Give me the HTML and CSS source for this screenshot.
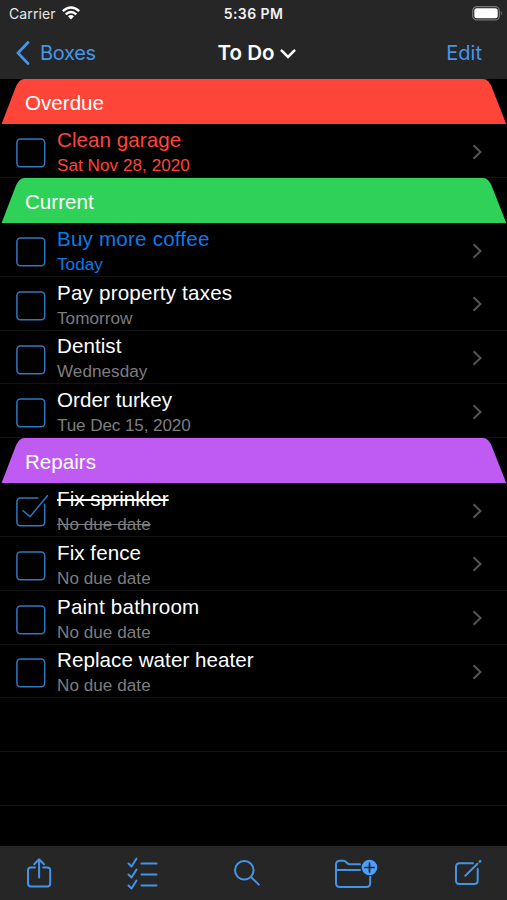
FILE: index.html
```html
<!DOCTYPE html>
<html lang="en">
<head>
<meta charset="utf-8">
<title>To Do</title>
<link rel="stylesheet" href="styles.css">
</head>
<body>
<svg class="defs" width="0" height="0" aria-hidden="true">
  <symbol id="tab" viewBox="0 0 507 45.2" preserveAspectRatio="none"><path d="M1.500 45.200 15 10Q18.500 0 24.500 0H483Q489 0 492.500 10L506.300 45.200Z" fill="currentColor"/></symbol>
  <symbol id="box" viewBox="0 0 32 32"><rect x=".9" y="3" width="27.800" height="27.700" rx="3.500"/></symbol>
  <symbol id="checked" viewBox="0 0 32 32"><path d="M22.300 3H4.400A3.500 3.500 0 0 0 .9 6.500V27.200A3.500 3.500 0 0 0 4.400 30.700H25.200A3.500 3.500 0 0 0 28.700 27.200V8.800M6.500 15.200 14 21.700 32 0"/></symbol>
  <symbol id="next" viewBox="0 0 10 16"><path d="M1.500 1.200 8.500 8 1.500 14.800"/></symbol>
</svg>
<div class="app">
  <header class="bar">
    <div class="status">
      <div class="carrier"><span>Carrier</span>
        <svg class="wifi" viewBox="0 0 18 14"><path d="M.8 5.200Q9-2 17.200 5.200M3.700 8.300Q9 3.700 14.300 8.300" fill="none" stroke="#fff" stroke-width="2.400"/><path d="M6 10.300Q9 7.900 12 10.300L9 13.500Z" fill="#fff"/></svg>
      </div>
      <span class="time">5:36 PM</span>
      <svg class="battery" viewBox="0 0 31 15"><rect x=".7" y=".7" width="26.600" height="13.200" rx="4" fill="none" stroke="#777" stroke-width="1.200"/><rect x="2.300" y="2.300" width="23.400" height="10" rx="2.500" fill="#fff"/><path d="M28.800 5Q31 7.300 28.800 9.600Z" fill="#777"/></svg>
    </div>
    <nav class="nav">
      <a class="back"><svg viewBox="0 0 14 24"><path d="M12 1.500 2 12 12 22.500"/></svg><span>Boxes</span></a>
      <h1><span>To Do</span><svg viewBox="0 0 16 10"><path d="M1.700 1.700 8 8 14.300 1.700"/></svg></h1>
      <a class="edit">Edit</a>
    </nav>
  </header>
  <main>
    <h2 class="red"><svg><use href="#tab"/></svg><span>Overdue</span></h2>
    <div class="row late"><svg class="check"><use href="#box"/></svg><div class="text"><p class="name">Clean garage</p><p class="due">Sat Nov 28, 2020</p></div><svg class="next"><use href="#next"/></svg></div>
    <h2 class="green"><svg><use href="#tab"/></svg><span>Current</span></h2>
    <div class="row today"><svg class="check"><use href="#box"/></svg><div class="text"><p class="name wide">Buy more coffee</p><p class="due">Today</p></div><svg class="next"><use href="#next"/></svg></div>
    <div class="row"><svg class="check"><use href="#box"/></svg><div class="text"><p class="name wide">Pay property taxes</p><p class="due">Tomorrow</p></div><svg class="next"><use href="#next"/></svg></div>
    <div class="row"><svg class="check"><use href="#box"/></svg><div class="text"><p class="name">Dentist</p><p class="due">Wednesday</p></div><svg class="next"><use href="#next"/></svg></div>
    <div class="row"><svg class="check"><use href="#box"/></svg><div class="text"><p class="name">Order turkey</p><p class="due tight">Tue Dec 15, 2020</p></div><svg class="next"><use href="#next"/></svg></div>
    <h2 class="purple"><svg><use href="#tab"/></svg><span>Repairs</span></h2>
    <div class="row done"><svg class="check"><use href="#checked"/></svg><div class="text"><p class="name">Fix sprinkler</p><p class="due">No due date</p></div><svg class="next"><use href="#next"/></svg></div>
    <div class="row"><svg class="check"><use href="#box"/></svg><div class="text"><p class="name">Fix fence</p><p class="due">No due date</p></div><svg class="next"><use href="#next"/></svg></div>
    <div class="row"><svg class="check"><use href="#box"/></svg><div class="text"><p class="name wide">Paint bathroom</p><p class="due">No due date</p></div><svg class="next"><use href="#next"/></svg></div>
    <div class="row"><svg class="check"><use href="#box"/></svg><div class="text"><p class="name">Replace water heater</p><p class="due">No due date</p></div><svg class="next"><use href="#next"/></svg></div>
    <div class="row"></div>
    <div class="row"></div>
  </main>
  <footer class="tools">
    <svg width="26" height="32" viewBox="0 0 26 32"><path d="M9 10.500H5Q2 10.500 2 13.500V26.500Q2 29.500 5 29.500H21.200Q24.200 29.500 24.200 26.500V13.500Q24.200 10.500 21.200 10.500H17.200M13.100 20.500V2.500M8.200 7.200 13.100 2.200 18 7.200"/></svg>
    <svg width="32" height="34" viewBox="0 0 32 34"><path d="M14.500 7.500H29.500M14.500 18.500H29.500M14.500 29.500H29.500M1.500 7.500 4.500 10.500 9.500 2.500M1.500 18.500 4.500 21.500 9.500 13.500M1.500 29.500 4.500 32.500 9.500 24.500"/></svg>
    <svg width="28" height="28" viewBox="0 0 28 28"><circle cx="11.300" cy="11.300" r="9.300"/><path d="M18 18 25.800 25.600"/></svg>
    <svg class="folder" width="44" height="32" viewBox="0 0 44 32"><path d="M26 7.200H15.500Q14 7.200 12.500 5.500 11 3.800 9.500 3.800H6Q2 3.800 2 7.800V26Q2 30 6 30H32.500Q36.200 30 36.200 26V20M2 13H26"/><circle class="plus-disc" cx="35.500" cy="10.500" r="7.800"/><path class="plus" d="M35.500 6V15M31 10.500H40"/></svg>
    <svg width="28" height="28" viewBox="0 0 28 28"><path d="M19 4.200H5.500Q2 4.200 2 7.700V21.500Q2 25 5.500 25H20.200Q23.700 25 23.700 21.500V10M11.300 16.800 23.500 4.800"/><path d="M25.800 2.600 26.200 2.200" stroke-width="2.600"/></svg>
  </footer>
</div>
</body>
</html>
```

FILE: styles.css
```css
* { box-sizing: border-box; margin: 0; padding: 0; }
body { background: #000; color: #fff; font-family: "Liberation Sans", Arial, sans-serif; }
svg { flex: none; display: block; }
.defs { position: absolute; }
.app { width: 507px; height: 900px; display: flex; flex-direction: column; overflow: hidden; }
.bar { height: 79px; flex: none; background: #262626; font-family: Inter, sans-serif; }
.status { height: 27px; display: grid; grid-template-columns: 1fr auto 1fr; align-items: center; padding: 0 6px; font-size: 14px; line-height: 27px; }
.carrier { display: flex; align-items: center; gap: 6px; padding-left: 3px; color: #e8e8e8; letter-spacing: .1px; }
.wifi { width: 18px; height: 14px; margin-top: -1px; }
.time { font-weight: 600; font-size: 14px; letter-spacing: .4px; color: #f2f2f2; }
.battery { width: 31px; height: 15px; justify-self: end; margin-right: -2px; }
.nav { height: 52px; display: grid; grid-template-columns: 1fr auto 1fr; align-items: center; padding: 0 25px 0 16px; font-size: 20px; line-height: 52px; color: #4595ed; }
.back { display: flex; align-items: center; gap: 10px; letter-spacing: -.3px; }
.back svg { width: 14px; height: 24px; fill: none; stroke: currentColor; stroke-width: 2.7; stroke-linecap: round; }
h1 { display: flex; align-items: center; gap: 6px; font-size: 20.5px; font-weight: 600; color: #fff; margin: 0 -8px 0 8px; }
h1 svg { width: 16px; height: 10px; margin-top: 2px; fill: none; stroke: currentColor; stroke-width: 2.5; stroke-linecap: round; }
.edit { text-align: right; }
main { flex: 1; min-height: 0; overflow: hidden; }
h2 { height: 45.2px; display: grid; font-size: 20.6px; font-weight: 400; line-height: 48px; }
h2 > * { grid-area: 1 / 1; }
h2 svg { width: 507px; height: 45.2px; }
h2 span { padding-left: 25px; color: #fff; z-index: 1; }
.red svg { color: #ff453a; }
.green svg { color: #30d158; }
.purple svg { color: #bf5af2; }
.row { height: 53.75px; display: flex; align-items: flex-start; border-bottom: 1px solid #121212; padding: 0 25px 0 16px; }
.check { width: 32px; height: 32px; margin-top: 11.9px; fill: none; stroke: #2f78bf; stroke-width: 1.5; overflow: visible; }
.text { flex: 1; margin-left: 9px; }
.name { font-size: 20.6px; line-height: 24px; padding-top: 3.8px; letter-spacing: .05px; }
.name.wide { letter-spacing: .2px; }
.due { font-size: 17.1px; line-height: 20px; padding-top: 4px; color: #7d7d80; letter-spacing: .05px; }
.due.tight { letter-spacing: -.1px; }
.late p { color: #ff453a; }
.today p { color: #0a7bea; }
.done p { text-decoration: line-through; }
.row .next { width: 10px; height: 16px; margin-top: 19.4px; fill: none; stroke: #555558; stroke-width: 2; }
.tools { height: 54px; flex: none; display: flex; justify-content: space-between; align-items: center; padding: 0 25px 0 26px; background: #262626; }
.tools svg { fill: none; stroke: #4393e8; stroke-width: 2; stroke-linecap: round; stroke-linejoin: round; }
.tools .folder { margin: 0 2px 0 -2px; }
.tools .plus-disc { fill: #4a9ff8; stroke: none; }
.tools .plus { stroke: #262626; stroke-width: 1.7; }
```
